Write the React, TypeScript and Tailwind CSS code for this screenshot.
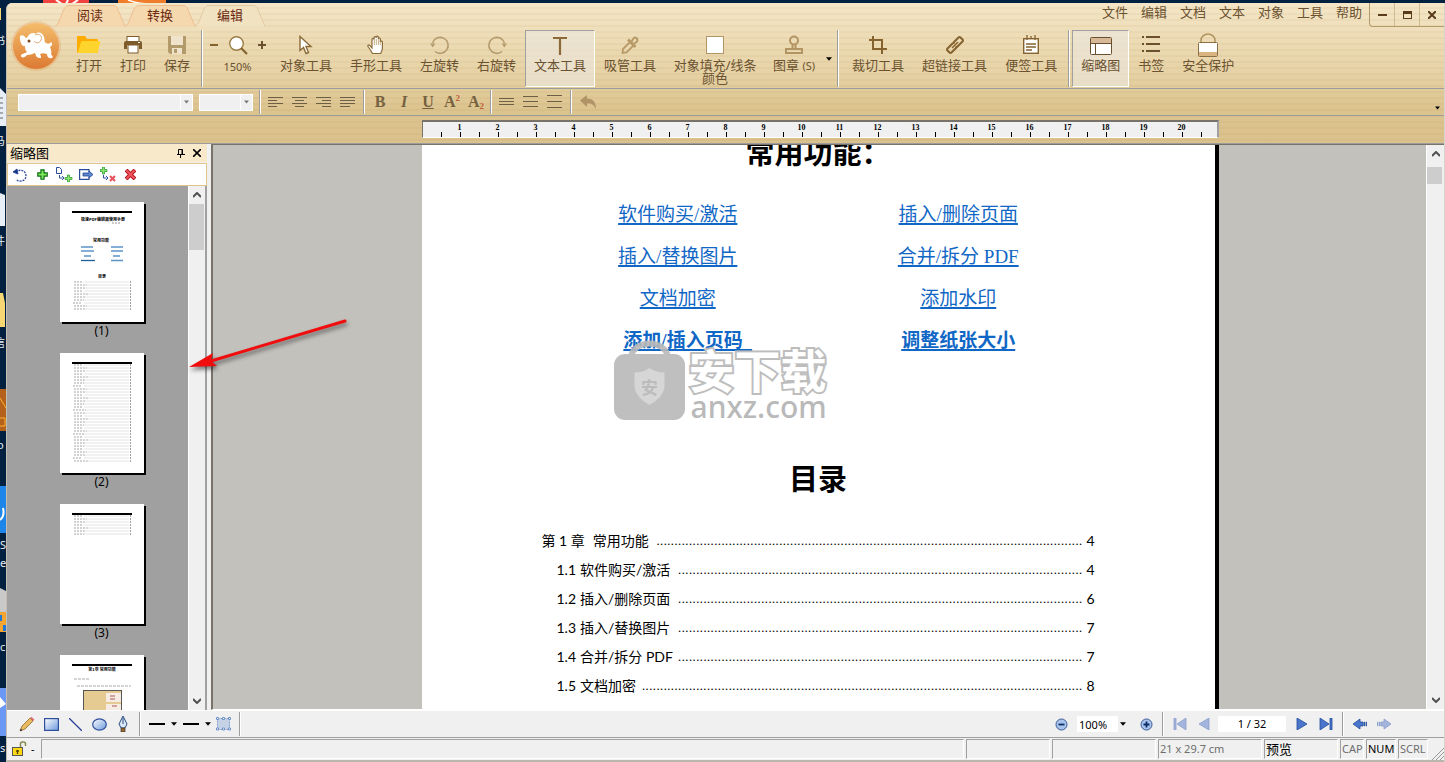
import React from "react";

const ruler = Array.from({ length: 20 }, (_, i) => i + 1);
const menus = ["文件", "编辑", "文档", "文本", "对象", "工具", "帮助"];

const tocRows = [
  { num: "第 1 章", title: "常用功能", page: "4", dots: 118 },
  { num: "1.1", title: "软件购买/激活", page: "4", dots: 112 },
  { num: "1.2", title: "插入/删除页面", page: "6", dots: 112 },
  { num: "1.3", title: "插入/替换图片", page: "7", dots: 112 },
  { num: "1.4", title: "合并/拆分 PDF", page: "7", dots: 112 },
  { num: "1.5", title: "文档加密", page: "8", dots: 122 },
];

/* Ribbon icons */
const FolderIcon = () => (
  <svg width="24" height="20" viewBox="0 0 24 20">
    <path d="M0 2q0-1 1-1h7l2 3h10q1 0 1 1v13H1q-1 0-1-1z" fill="#ffab00" />
    <path d="M5 6h17q2 0 1 2l-2 9q0 1-2 1H1q-1 0 0-1l3-10z" fill="#ffd52d" />
  </svg>
);

const PrintIcon = () => (
  <svg width="20" height="20" viewBox="0 0 20 20">
    <rect x="4" y="1.500" width="12" height="5" fill="#fff" stroke="#7d5b2b" />
    <path d="M1 8q0-2 2-2h14q2 0 2 2v6h-3v-4H4v4H1z" fill="#7d5b2b" />
    <rect x="5" y="10" width="10" height="8" fill="#fff" stroke="#7d5b2b" />
    <rect x="15" y="7" width="2" height="1" fill="#fff" />
  </svg>
);

const SaveIcon = () => (
  <svg width="20" height="20" viewBox="0 0 20 20">
    <path d="M1 1h18v18H3l-2-2z" fill="#b39a6b" />
    <rect x="4" y="1" width="12" height="9" fill="#efe3cb" />
    <rect x="5" y="13" width="10" height="6" fill="#efe3cb" />
    <rect x="7" y="14" width="3" height="4" fill="#b39a6b" />
  </svg>
);

const CursorIcon = () => (
  <svg width="20" height="20" viewBox="0 0 20 20">
    <path d="M4 1.500v14l3.500-3 2.500 6 2.500-1-2.500-6h5z" fill="#fff" stroke="#8a6a35" strokeWidth="1.400" />
  </svg>
);

const HandIcon = () => (
  <svg width="20" height="20" viewBox="0 0 20 20">
    <path
      d="M6.500 18.500c-1-2-3-5-4.500-7-.7-1.300 1-2 2-.8L6 13V4.500c0-1.500 2-1.500 2 0V3c0-1.800 2.200-1.800 2.200 0v-.6c0-1.800 2.200-1.800 2.200 0V4c.2-1.500 2-1.300 2 .2V7c.3-1.300 2-1.200 2 .3V13c0 3-1.400 4-1.700 5.500z"
      fill="#fff"
      stroke="#8a6a35"
      strokeWidth="1.200"
    />
    <path d="M8.300 4v6M10.300 4v6M12.400 4v6M14.300 6v4" stroke="#b79a67" strokeWidth=".8" />
  </svg>
);

const RotateIcon = ({ flip }: { flip?: boolean }) => (
  <svg width="20" height="20" viewBox="0 0 20 20" className={flip ? "-scale-x-100" : ""}>
    <path d="M2.500 8A8 8 0 1 1 5 16.500" fill="none" stroke="#b59b6c" strokeWidth="1.600" />
    <path d="M0 8.500h5.400L2.700 12.500z" fill="#b59b6c" />
  </svg>
);

const TextIcon = () => (
  <svg width="20" height="20" viewBox="0 0 20 20">
    <path d="M3 3h14M10 3v17" stroke="#8b6a38" strokeWidth="2.200" />
  </svg>
);

const DropperIcon = () => (
  <svg width="20" height="20" viewBox="0 0 20 20" fill="none" stroke="#b79a67" strokeWidth="1.800">
    <path d="M2.500 18l.5-4L10 7l3.500 3.500-7 7z" />
    <path d="M8 4.500l7.500 7.500" strokeWidth="2.800" />
    <path d="M11 7.500l2.500-4c1.500-2.500 5 .5 3.500 3L13 9.500z" strokeWidth="2" />
  </svg>
);

const StampIcon = () => (
  <svg width="20" height="20" viewBox="0 0 20 20" fill="none" stroke="#b39463" strokeWidth="2">
    <circle cx="10" cy="5.500" r="4" />
    <path d="M8.500 9v5M11.500 9v5M2 14h16v4H2z" />
  </svg>
);

const CropIcon = () => (
  <svg width="20" height="20" viewBox="0 0 20 20" fill="none" stroke="#85632f" strokeWidth="2">
    <path d="M1 5h13v14M5 1v13h14" />
  </svg>
);

const LinkIcon = () => (
  <svg width="20" height="20" viewBox="0 0 20 20" fill="none" stroke="#85632f" strokeWidth="2">
    <path d="M8.500 7.500l5-5q1-1 2 0l2 2q1 1 0 2l-5 5q-1 1-2 0" />
    <path d="M11.500 12.500l-5 5q-1 1-2 0l-2-2q-1-1 0-2l5-5q1-1 2 0" />
    <path d="M7 13l6-6" strokeWidth="1.500" />
  </svg>
);

const NoteIcon = () => (
  <svg width="20" height="20" viewBox="0 0 20 20">
    <rect x="2.700" y="3.700" width="14.600" height="14.600" fill="#fff" stroke="#85632f" strokeWidth="1.400" />
    <path d="M6 0v5M10 1v3M14 0v5M5 9h10M5 12h10M5 15h6" stroke="#85632f" strokeWidth="1.300" />
  </svg>
);

const ThumbIcon = () => (
  <svg width="24" height="20" viewBox="0 0 24 20">
    <rect x="1.500" y="2.500" width="21" height="17" rx="1" fill="#fff" stroke="#6b5030" />
    <path d="M2 3h20v5H2z" fill="#d7b897" />
    <path d="M2 8.500h20M6.500 8.500V19" stroke="#6b5030" />
  </svg>
);

const ListIcon = () => (
  <svg width="20" height="20" viewBox="0 0 20 20">
    <path d="M1 2h2M5 2h14M1 9h2M5 9h14M1 16h2M5 16h14" stroke="#6b5030" strokeWidth="2" />
  </svg>
);

const LockIcon = () => (
  <svg width="22" height="24" viewBox="0 0 22 24">
    <path d="M4 10V7.500a7 6.500 0 0 1 14 0V10" fill="none" stroke="#b0935f" strokeWidth="1.500" />
    <rect x="1.500" y="9.500" width="19" height="14" rx="1" fill="#fff" stroke="#8d6e42" />
    <path d="M2 19h18v4H2z" fill="#d9b481" />
  </svg>
);

const SquareIcon = () => <span className="block h-[18px] w-[18px] border border-[#b39463] bg-white" />;

const ElephantLogo = () => (
  <svg width="52" height="52" viewBox="0 0 52 52" className="absolute left-[3px] top-[17px]">
    <defs>
      <linearGradient id="logo" x1="0" y1="0" x2="0" y2="1">
        <stop offset="0" stopColor="#f4bd6c" />
        <stop offset="1" stopColor="#dc7a32" />
      </linearGradient>
    </defs>
    <circle cx="26" cy="26" r="25" fill="#e9a060" opacity=".35" />
    <circle cx="26" cy="26" r="23" fill="url(#logo)" />
    <path
      d="M10 18c-1-3 3-4 5-1 1 2 2 1 3-1 2-3 6-4 8-2 2-3 7-1 8 3 1 3 0 5 2 6 2 1 4 1 5-1 2 1 1 4-1 5 1 3 2 5 1 7 1 2 3 3 1 4-3 1-5-1-5-4-3-1-5-1-7 0 1 2 2 4 0 4-4 0-4-3-5-5-3 1-5 2-8 2-2 3-6 3-6 1 0-3 4-2 6-4-2-2-2-4-2-6-3 1-5-4-5-8z"
      fill="#fff"
    />
    <path d="M25 15c4-2 8 1 6 5-1 3-5 4-7 1" fill="none" stroke="#e0ab78" />
    <circle cx="19" cy="21" r="1.500" fill="#7c4a20" />
  </svg>
);

const Caret = ({ className = "" }: { className?: string }) => (
  <svg width="7" height="4" viewBox="0 0 7 4" className={className} fill="currentColor">
    <path d="M0 0h7L3.500 4z" />
  </svg>
);

interface ToolProps {
  label: React.ReactNode;
  icon: React.ReactNode;
  active?: boolean;
  width?: string;
}

const Tool: React.FC<ToolProps> = ({ label, icon, active, width = "" }) => (
  <button
    className={`flex h-[57px] shrink-0 flex-col items-center px-2 pt-1 text-[13px] leading-[13px] ${width} ${
      active ? "border border-b-white border-l-[#a0a0a0] border-r-white border-t-[#a0a0a0] bg-[#ebe5da]/70" : "border border-transparent"
    }`}
  >
    <span className="flex h-5 items-center justify-center">{icon}</span>
    <span className="mt-1 whitespace-nowrap">{label}</span>
  </button>
);

const Divider = ({ h = "h-[57px]" }: { h?: string }) => (
  <span className={`w-[2px] shrink-0 border-l border-r border-l-[#9c9c9c] border-r-white ${h}`} />
);

const AlignIcon = ({ kind }: { kind: "left" | "center" | "right" | "justify" }) => {
  const d = {
    left: "M0 1.500h15M0 4.500h9M0 7.500h15M0 10.500h9",
    center: "M0 1.500h15M3 4.500h9M0 7.500h15M3 10.500h9",
    right: "M0 1.500h15M6 4.500h9M0 7.500h15M6 10.500h9",
    justify: "M0 1.500h15M0 4.500h15M0 7.500h15M0 10.500h10",
  }[kind];
  return (
    <svg width="15" height="12" viewBox="0 0 15 12" stroke="#6d5f45">
      <path d={d} />
    </svg>
  );
};

const SpacingIcon = ({ gap }: { gap: number }) => (
  <svg width="15" height="14" viewBox="0 0 15 14" stroke="#6d5f45">
    <path d={`M0 ${6.5 - gap}h15M0 6.500h15M0 ${6.5 + gap}h15`} />
  </svg>
);

const FmtButton = ({ label, children }: { label: string; children: React.ReactNode }) => (
  <button aria-label={label} className="flex h-6 w-6 shrink-0 items-center justify-center font-['Liberation_Serif',serif] text-base font-bold leading-none text-[#75603f]">
    {children}
  </button>
);

const Tab = ({ label, active }: { label: string; active?: boolean }) => (
  <button className="relative h-[23px] w-[70px] text-[13px] leading-none text-[#6b2a10]">
    <svg width="72" height="22" viewBox="0 0 72 22" className="absolute left-0 top-px">
      <path
        d="M0 21.500C5 20 7 4 11 1.500Q12 .5 14 .5h44q3 0 4 2l8 19"
        fill={active ? "#f1e2c2" : "#f6d8ae"}
        stroke={active ? "#e4c9a0" : "#eebd90"}
      />
    </svg>
    <span className="relative">{label}</span>
  </button>
);

const ScrollArrow = ({ down }: { down?: boolean }) => (
  <button aria-label={down ? "向下滚动" : "向上滚动"} className="flex h-[18px] w-full items-center justify-center">
    <svg width="8" height="6" viewBox="0 0 8 6" className={down ? "rotate-180" : ""}>
      <path d="M0 5l4-4 4 4" fill="none" stroke="#505050" strokeWidth="2" />
    </svg>
  </button>
);

/* Page thumbnails */
const lineRows = (from: number, count: number, step = 3) =>
  Array.from({ length: count }, (_, i) => (
    <g key={i}>
      <path d={`M${i % 8 === 7 ? 13 : 14} ${from + i * step}h${8 + ((i * 5) % 7)}`} stroke="#a5a5a5" strokeDasharray="2 1" />
      <path d={`M24 ${from + i * step}h45`} stroke="#e4e4e4" />
      <path d={`M70 ${from + i * step}h1`} stroke="#444" />
    </g>
  ));

const Thumb = ({ n }: { n: number }) => (
  <li className="flex h-[151px] shrink-0 flex-col items-center">
    <a href={`#page-${n}`} className="block bg-white shadow-[2px_2px_0_#000]">
      <svg width="84" height="120" viewBox="0 0 84 120" className="block" fontFamily="'Noto Sans CJK SC',sans-serif" textAnchor="middle">
        <path d="M12 10h60" stroke="#000" strokeWidth="2" />
        {n === 1 && (
          <g>
            <text x="43" y="18.500" fontSize="4" fontWeight="700">极速PDF编辑器使用手册</text>
            <path d="M52 21h9" stroke="#999" strokeDasharray="2 1" />
            <text x="41" y="39.500" fontSize="4" fontWeight="700">常用功能</text>
            <path d="M21 45h12M21 49h13M24 54h7M51 45h12M51 49h12M53 54h7M51 58.500h12" stroke="#5b94c8" strokeWidth="1.300" />
            <path d="M21 58.500h14" stroke="#1f5f9c" strokeWidth="1.300" />
            <text x="42" y="75.500" fontSize="4" fontWeight="700">目录</text>
            {lineRows(80, 10)}
          </g>
        )}
        {n === 2 && lineRows(12, 33)}
        {n === 3 && lineRows(12, 7)}
        {n === 4 && (
          <g>
            <text x="42" y="15.500" fontSize="4" fontWeight="700">第1章 常用功能</text>
            <path d="M14 24h15M17 31h54" stroke="#aaa" strokeDasharray="3 1" />
            <rect x="23.500" y="35.500" width="38" height="40" fill="#e5cb92" stroke="#555" />
            <path d="M46 38h15v9H46zM46 49h15v8H46z" fill="#f6ece4" />
            <path d="M50 41h5M50 44h5M52 51h5" stroke="#a55" />
          </g>
        )}
      </svg>
    </a>
    <span className="mt-[3px] text-xs leading-3 text-black">({n})</span>
  </li>
);

const PanelButton = ({ label, children }: { label: string; children: React.ReactNode }) => (
  <button aria-label={label} className="flex h-5 w-[22px] items-center justify-center">
    {children}
  </button>
);

const plus = "M4 0h4v4h4v4H8v4H4V8H0V4h4z";

const Sidebar = () => (
  <aside className="flex w-[200px] shrink-0 flex-col bg-[#f0f0f0]">
    <div className="flex h-[18px] items-center bg-[#f9e9cb] pl-[3px] pr-0.5 text-black">
      <h2 className="flex-1 text-[13px] leading-none">缩略图</h2>
      <button aria-label="固定" className="flex h-4 w-4 items-center justify-center">
        <svg width="8" height="9" viewBox="0 0 8 9" fill="none" stroke="#000">
          <path d="M1.500 5V.5h4V5M5 .5V5M0 5.500h8M3.500 5.500V9" />
        </svg>
      </button>
      <button aria-label="关闭面板" className="flex h-4 w-4 items-center justify-center">
        <svg width="8" height="8" viewBox="0 0 8 8" stroke="#000" strokeWidth="1.600">
          <path d="M0 0l8 8M8 0L0 8" />
        </svg>
      </button>
    </div>
    <div className="mt-px flex h-[23px] items-center border border-[#e0c48a] bg-white pl-px">
      <PanelButton label="旋转">
        <svg width="14" height="14" viewBox="0 0 14 14" fill="none" stroke="#2f4a9e">
          <path d="M3 4.500C6 .500 13 2 13 8c0 5-7 7-10 3" strokeWidth="1.300" strokeDasharray="2 1" />
          <path d="M0 4l4-3 1 5z" fill="#16347c" />
        </svg>
      </PanelButton>
      <PanelButton label="添加">
        <svg width="11" height="11" viewBox="-1 -1 14 14"><path d={plus} fill="#7ee85c" stroke="#0a6b12" strokeWidth="1.500" /></svg>
      </PanelButton>
      <PanelButton label="插入页面">
        <svg width="17" height="15" viewBox="0 0 17 15">
          <path d="M.5.500h3l2 2v4h-5zM3.500 8v3h3M6 9l2 2-2 2" fill="none" stroke="#2a4c9c" />
          <path d="M11.500 8h2v2.500H16v2h-2.500V15h-2v-2.500H9v-2h2.500z" fill="#8de86c" stroke="#2e9a36" strokeWidth=".8" />
        </svg>
      </PanelButton>
      <PanelButton label="提取页面">
        <svg width="15" height="11" viewBox="0 0 15 11">
          <path d="M10 3V.6H.6v9.800H10V8" fill="none" stroke="#2a4c9c" strokeWidth="1.200" />
          <path d="M4 4h6V2l4 3.500L10 9V7H4z" fill="#5b86d0" stroke="#24488f" strokeWidth=".8" />
        </svg>
      </PanelButton>
      <PanelButton label="替换页面">
        <svg width="17" height="15" viewBox="0 0 17 15">
          <path d="M2.500 0h2v2.500H7v2H4.500V7h-2V4.500H0v-2h2.500z" fill="#8de86c" stroke="#2e9a36" strokeWidth=".8" />
          <path d="M3.500 8v3h3M6 9l2 2-2 2" fill="none" stroke="#2a4c9c" />
          <path d="M10 9l5 5M15 9l-5 5" stroke="#e8505a" strokeWidth="2" />
        </svg>
      </PanelButton>
      <PanelButton label="删除">
        <svg width="11" height="11" viewBox="0 0 11 11">
          <path d="M1 1l9 9M10 1l-9 9" stroke="#b3141e" strokeWidth="4" />
          <path d="M1.500 1.500l8 8M9.500 1.500l-8 8" stroke="#f0545c" strokeWidth="2" />
        </svg>
      </PanelButton>
    </div>
    <div className="flex min-h-0 flex-1">
      <ul className="flex min-w-0 flex-1 flex-col overflow-hidden bg-[#a0a0a0] pl-2 pt-4">
        {[1, 2, 3, 4].map((n) => (
          <Thumb key={n} n={n} />
        ))}
      </ul>
      <div className="flex w-[17px] flex-col border-l border-white bg-[#f0f0f0]">
        <ScrollArrow />
        <div className="h-[46px] w-[15px] bg-[#cdcdcd]" />
        <div className="flex-1" />
        <ScrollArrow down />
      </div>
      <div className="w-[2px] bg-[#a0a0a0]" />
    </div>
  </aside>
);

const DocLink = ({ children, className = "" }: { children: React.ReactNode; className?: string }) => (
  <p className={`h-[42px] ${className}`}>
    <a href="#toc" className="text-[#1167c5] underline decoration-2 underline-offset-2">{children}</a>
  </p>
);

const Watermark = () => (
  <div className="pointer-events-none absolute left-[192px] top-[195px] flex items-end gap-1 text-[#b9b9b9]">
    <svg width="71" height="82" viewBox="0 0 71 82" className="opacity-90">
      <path d="M17 17C20 -1 51 -1 54 17" fill="none" stroke="currentColor" strokeWidth="6" />
      <rect y="14" width="71" height="66" rx="11" fill="currentColor" />
      <path d="M35.500 28c5 4 10 4 15 4.500V47q-1 10-15 18-14-8-15-18V32.500c5-.5 10-.5 15-4.500z" fill="#d2d2d2" />
      <text x="35.500" y="54" fontSize="17" fontWeight="700" textAnchor="middle" fill="#b5b5b5">安</text>
    </svg>
    <div className="leading-none">
      <p className="h-[39px] whitespace-nowrap text-[46px] font-bold leading-[54px] text-white [-webkit-text-stroke:4px_#bdbdbd] [paint-order:stroke_fill]">安下载</p>
      <p className="h-10 pl-0.5 font-['Noto_Sans',sans-serif] text-[30px] font-medium leading-[50px]">anxz.com</p>
    </div>
  </div>
);

const DocPage = () => (
  <article className="relative w-[797px] shrink-0 border-r-4 border-black bg-white px-[120px] text-black">
    <div className="h-[49px] overflow-hidden">
      <h1 className="-mt-3 text-center text-[29px] font-bold leading-10">常用功能：</h1>
    </div>
    <div className="-mx-1 grid grid-cols-2 text-center font-['Liberation_Serif','Noto_Sans_CJK_SC',serif] text-[19px] leading-[42px]">
      <DocLink>软件购买/激活</DocLink>
      <DocLink>插入/删除页面</DocLink>
      <DocLink>插入/替换图片</DocLink>
      <DocLink>合并/拆分 PDF</DocLink>
      <DocLink>文档加密</DocLink>
      <DocLink>添加水印</DocLink>
      <DocLink className="pl-5 font-bold">添加/插入页码&nbsp;&nbsp;</DocLink>
      <DocLink className="font-bold">调整纸张大小</DocLink>
    </div>
    <Watermark />
    <h1 id="toc" className="pt-[97px] text-center text-[29px] font-bold leading-10">目录</h1>
    <ol className="pt-[27px] font-['Lato','Noto_Sans_CJK_SC',sans-serif] text-[14px] leading-[29px]">
      {tocRows.map((row, i) => (
        <li key={row.num}>
          <a href={`#page-${row.page}`} className={`flex gap-1 ${i > 0 ? "pl-[15px]" : ""}`}>
            <span className={i > 0 ? "" : "pr-1"}>{row.num}</span>
            <span>{row.title}</span>
            <span aria-hidden="true" className="min-w-0 flex-1 whitespace-nowrap text-right font-['Liberation_Sans',sans-serif] text-[13px]">
              {".".repeat(row.dots)}
            </span>
            <span>{row.page}</span>
          </a>
        </li>
      ))}
    </ol>
  </article>
);

const BarButton = ({ label, children }: { label: string; children: React.ReactNode }) => (
  <button aria-label={label} className="flex h-6 w-6 shrink-0 items-center justify-center">
    {children}
  </button>
);

const ZoomGlyph = ({ d }: { d: string }) => (
  <svg width="13" height="13" viewBox="0 0 13 13">
    <circle cx="6.500" cy="6.500" r="5.500" fill="#a9c4ea" stroke="#3a5a9a" />
    <path d={d} stroke="#0f2d6b" strokeWidth="1.800" />
  </svg>
);

const NavGlyph = ({ d, dim }: { d: string; dim?: boolean }) => (
  <svg width="14" height="12" viewBox="0 0 14 12">
    <path d={d} fill={dim ? "#a3b5dc" : "#4a76cb"} stroke={dim ? "#8ba0cc" : "#234c9c"} strokeWidth=".8" />
  </svg>
);

const BottomBar = () => (
  <div className="flex h-7 shrink-0 items-center border-b border-t border-b-[#a0a0a0] border-t-white bg-[#f0f0f0] pl-2 pr-12 text-black">
    <BarButton label="铅笔">
      <svg width="16" height="16" viewBox="0 0 16 16">
        <path d="M1 15l2-5 8-8 3 3-8 8z" fill="#e9b85f" stroke="#8a6a30" strokeWidth=".8" />
        <path d="M11 2l1.500-1.300 3 3L14 5z" fill="#dd6f72" />
        <path d="M1 15l.8-2.200 1.500 1.500z" fill="#222" />
      </svg>
    </BarButton>
    <BarButton label="矩形">
      <svg width="15" height="13" viewBox="0 0 15 13">
        <defs>
          <linearGradient id="blue" x1="0" y1="0" x2="1" y2="1">
            <stop offset="0" stopColor="#fff" />
            <stop offset="1" stopColor="#6c98dc" />
          </linearGradient>
        </defs>
        <rect x=".6" y=".6" width="13.800" height="11.800" fill="url(#blue)" stroke="#2f4f9c" strokeWidth="1.200" />
      </svg>
    </BarButton>
    <BarButton label="直线">
      <svg width="13" height="13" viewBox="0 0 13 13" stroke="#2d449a" strokeWidth="1.300"><path d="M0 0l13 13" /></svg>
    </BarButton>
    <BarButton label="椭圆">
      <svg width="15" height="13" viewBox="0 0 15 13">
        <ellipse cx="7.500" cy="6.500" rx="6.800" ry="5.600" fill="url(#blue)" stroke="#2f4f9c" strokeWidth="1.200" />
      </svg>
    </BarButton>
    <BarButton label="钢笔">
      <svg width="10" height="16" viewBox="0 0 10 16">
        <path d="M5 0l4 8-2 4H3L1 8z" fill="#dbe7f7" stroke="#2a4c7c" />
        <path d="M5 2v6" stroke="#2a4c7c" />
        <path d="M3 12h4v4H3z" fill="#9a6a2c" stroke="#222" strokeWidth=".6" />
      </svg>
    </BarButton>
    <span className="pl-1"><Divider h="block h-6" /></span>
    <button aria-label="线型" className="ml-2 flex h-6 items-center gap-[6px] pr-[6px]">
      <span className="h-[2px] w-4 bg-black" />
      <Caret className="w-[6px]" />
    </button>
    <button aria-label="线宽" className="flex h-6 items-center gap-[6px]">
      <span className="h-[2px] w-4 bg-black" />
      <Caret className="w-[6px]" />
    </button>
    <BarButton label="选择对象">
      <svg width="15" height="14" viewBox="0 0 15 14">
        <rect x="1.500" y="1.500" width="12" height="11" fill="#c5d2e6" stroke="#7f9cc8" strokeDasharray="2 1" />
        {[0, 6, 12].map((x) => (
          <path key={x} d={`M${x + 0.5}.5h2v2h-2zM${x + 0.5} 11h2v2h-2z`} fill="#fff" stroke="#6f92c8" />
        ))}
      </svg>
    </BarButton>
    <span className="pl-1"><Divider h="block h-6" /></span>
    <div className="flex-1" />
    <BarButton label="缩小"><ZoomGlyph d="M3.500 6.500h6" /></BarButton>
    <label className="relative mx-1 text-[11px]">
      <select aria-label="缩放比例" className="block h-4 w-[53px] appearance-none bg-white pl-[2px] leading-none" defaultValue="100%">
        <option>100%</option>
        <option>150%</option>
      </select>
      <span className="pointer-events-none absolute inset-y-0 right-0 flex w-3 items-center bg-[#f0f0f0] pl-[2px]"><Caret className="w-[6px]" /></span>
    </label>
    <BarButton label="放大"><ZoomGlyph d="M3.500 6.500h6M6.500 3.500v6" /></BarButton>
    <span className="px-1"><Divider h="block h-6" /></span>
    <BarButton label="第一页"><NavGlyph dim d="M1 0h2v12H1zM13 0v12L4 6z" /></BarButton>
    <BarButton label="上一页"><NavGlyph dim d="M12 0v12L2 6z" /></BarButton>
    <input aria-label="页码" defaultValue="1 / 32" className="ml-0.5 mr-1 h-4 w-[68px] bg-white text-center text-[11px]" />
    <BarButton label="下一页"><NavGlyph d="M2 0v12L12 6z" /></BarButton>
    <BarButton label="最后一页"><NavGlyph d="M11 0h2v12h-2zM1 0v12l9-6z" /></BarButton>
    <span className="px-1"><Divider h="block h-6" /></span>
    <BarButton label="后退"><NavGlyph d="M0 6l7-5v3h3v4H7v3zM11 4h.5v4H11zM13 4h.5v4H13z" /></BarButton>
    <BarButton label="前进"><NavGlyph dim d="M14 6L7 1v3H4v4h3v3zM2.500 4h.5v4h-.5zM.5 4H1v4H.5z" /></BarButton>
  </div>
);

const Cell = ({ children, className = "" }: { children?: React.ReactNode; className?: string }) => (
  <div className={`h-5 shrink-0 whitespace-nowrap border border-b-white border-l-[#a0a0a0] border-r-white border-t-[#a0a0a0] pl-px leading-[18px] ${className}`}>
    {children}
  </div>
);

const StatusBar = () => (
  <footer className="flex h-6 shrink-0 items-center gap-[2px] border-b-2 border-[#bab7ae] bg-[#f0f0f0] font-['Noto_Sans','Noto_Sans_CJK_SC',sans-serif] text-[11px] text-[#6d6d6d]">
    <button aria-label="文档权限" className="flex w-8 shrink-0 items-center gap-1 pl-1 text-black">
      <svg width="16" height="16" viewBox="0 0 16 16">
        <path d="M9.500 7V3q0-2 2-2h1q2 0 2 2v2" fill="none" stroke="#8a8a50" strokeWidth="1.500" />
        <rect x="1.500" y="6.500" width="10" height="8" fill="#ffd814" stroke="#555" />
        <path d="M6.500 9v4M5 10h3" stroke="#554400" strokeWidth="1.300" />
      </svg>
      <span>-</span>
    </button>
    <Cell className="min-w-0 flex-1" />
    <Cell className="w-[84px]" />
    <Cell className="w-[104px]" />
    <Cell className="w-[104px]">21 x 29.7 cm</Cell>
    <Cell className="w-[74px] text-[13px] text-black">预览</Cell>
    <Cell className="w-6">CAP</Cell>
    <Cell className="w-[30px] text-black">NUM</Cell>
    <Cell className="w-[30px]">SCRL</Cell>
    <svg width="14" height="14" viewBox="0 0 14 14" className="shrink-0 self-end" stroke="#9a9a9a">
      <path d="M2 14L14 2M6 14l8-8M10 14l4-4" />
    </svg>
  </footer>
);

/* Sliver of the desktop left of the window */
const DesktopEdge = () => (
  <svg width="6" height="762" viewBox="0 0 6 762" className="shrink-0" fill="#e8eef5" fontFamily="'Noto Sans','Noto Sans CJK SC',sans-serif" fontSize="11">
    <path d="M0 8h1v12H0zM0 293h3l2 10v24H0z" fill="#f7d774" />
    <text x="-6" y="45">书</text>
    <path d="M0 88l6 6v32H0zM0 193l5 2v31H0z" />
    <path d="M0 98h3M0 103h3M0 108h3M0 113h3M0 118h3M0 598h6M0 606h6" stroke="#666" />
    <text x="-6" y="145">马</text>
    <text x="-6" y="245">件</text>
    <text x="-6" y="347">信</text>
    <path d="M0 389h6v42H0z" fill="#b4611c" />
    <path d="M0 398l6 10M0 418h5v8H0" stroke="#ffb22e" fill="none" />
    <text x="-3" y="449">o</text>
    <path d="M0 486h6v47H0z" fill="#1e86e8" />
    <path d="M3 508q2 8-3 12" stroke="#fff" strokeWidth="2" fill="none" />
    <text x="0" y="549">S</text>
    <text x="0" y="567">e</text>
    <path d="M0 588l6 3v21H0z" fill="#c9c9c9" />
    <path d="M0 612h6v20H0z" fill="#f5a530" />
    <path d="M0 615h2v6H0zM3 625h3v6H3z" fill="#1f78d8" />
    <text x="0" y="651">c</text>
    <path d="M0 688h6v48H0z" fill="#6b97f5" />
    <path d="M0 697l6 7-6 4z" fill="#fff" />
    <text x="0" y="752">s</text>
  </svg>
);

export default function App() {
  return (
    <div className="relative flex h-screen overflow-hidden bg-[#02203f] pt-[3px] font-['Noto_Sans','Noto_Sans_CJK_SC',sans-serif] text-[#6b5230]">
      {/* Desktop icons behind the title bar */}
      <svg width="130" height="4" viewBox="0 0 130 4" className="absolute left-[42px] top-0">
        <path d="M1 0h46v4H1z" fill="#f0433f" />
        <path d="M14 0l6 4M24 4l2-4M36 0l-6 4" stroke="#fff" strokeWidth="2" />
        <path d="M76 0h48v4H76z" fill="#ef7d2c" />
        <path d="M86 0q10 4 24 4" stroke="#fff" fill="none" strokeWidth="1.500" />
      </svg>
      <div className="-mt-[3px] shrink-0">
        <DesktopEdge />
      </div>

      <div className="relative flex min-w-0 flex-1 flex-col overflow-hidden rounded-tl-md border-l border-r border-l-[#c4bfb2] border-r-[#d6d3cb] bg-[#f0f0f0]">
        <header className="relative shrink-0 bg-[repeating-linear-gradient(to_bottom,transparent_0_4px,rgba(150,110,50,0.06)_4px_6px),linear-gradient(to_bottom,#f4e6c7,#e6d2a5_50%,#dcc48f_75%,#dbc18c)]">
          {/* Title row */}
          <div className="flex h-[27px] items-start">
            <div className="flex pl-12 pt-px">
              <Tab label="阅读" />
              <Tab label="转换" />
              <Tab label="编辑" active />
            </div>
            <div className="flex-1" />
            <nav className="flex gap-[13px] pr-[7px] pt-[3px] text-[13px] leading-[13px]">
              {menus.map((m) => (
                <button key={m}>{m}</button>
              ))}
            </nav>
            <div className="flex h-6 rounded-bl border-b border-l border-[#b39a6b] text-[#5a3b1a]">
              <button aria-label="最小化" className="flex w-[25px] items-center justify-center border-r border-[#d0bc92]">
                <span className="h-[2px] w-[9px] bg-[#5a3b1a]" />
              </button>
              <button aria-label="最大化" className="flex w-[25px] items-center justify-center border-r border-[#d0bc92]">
                <span className="h-2 w-[9px] border border-t-[3px] border-[#5a3b1a]" />
              </button>
              <button aria-label="关闭" className="flex w-6 items-center justify-center">
                <svg width="8" height="8" viewBox="0 0 8 8" stroke="currentColor" strokeWidth="2"><path d="M0 0l8 8M8 0L0 8" /></svg>
              </button>
            </div>
          </div>
          <ElephantLogo />

          {/* Tool row */}
          <div className="flex h-[59px] items-start border-b border-[#9c9c9c] pl-[60px]">
            <Tool label="打开" icon={<FolderIcon />} width="w-11" />
            <Tool label="打印" icon={<PrintIcon />} width="w-11" />
            <Tool label="保存" icon={<SaveIcon />} width="w-11" />
            <span className="w-0.5 shrink-0" />
            <Divider />
            <div className="flex w-[68px] shrink-0 flex-col items-center pl-px pt-1">
              <div className="flex h-[22px] items-center gap-2">
                <button aria-label="缩小" className="flex h-5 w-3 items-center justify-center">
                  <span className="h-[2px] w-2 bg-[#85632f]" />
                </button>
                <svg width="20" height="20" viewBox="0 0 20 20">
                  <circle cx="8.500" cy="8.500" r="6.800" fill="#fff" stroke="#9b7c47" strokeWidth="1.400" />
                  <path d="M13 13l6 6" stroke="#85632f" strokeWidth="2.200" />
                </svg>
                <button aria-label="放大" className="flex h-5 w-3 items-center justify-center">
                  <svg width="8" height="8" viewBox="0 0 8 8" stroke="#6b5030" strokeWidth="2"><path d="M0 4h8M4 0v8" /></svg>
                </button>
              </div>
              <span className="mt-1 text-[11px] leading-[13px]">150%</span>
            </div>
            <Tool label="对象工具" icon={<CursorIcon />} />
            <Tool label="手形工具" icon={<HandIcon />} />
            <Tool label="左旋转" icon={<RotateIcon />} />
            <Tool label="右旋转" icon={<RotateIcon flip />} />
            <Tool label="文本工具" icon={<TextIcon />} active />
            <Tool label="吸管工具" icon={<DropperIcon />} />
            <Tool label={<>对象填充/线条<br />颜色</>} icon={<SquareIcon />} width="w-[100px]" />
            <Tool label={<>图章 <span className="text-[11px]">(S)</span></>} icon={<StampIcon />} width="w-[58px]" />
            <button aria-label="图章选项" className="flex h-[57px] w-3 shrink-0 items-center justify-center text-black">
              <Caret className="w-[6px]" />
            </button>
            <span className="pl-0.5"><Divider h="block h-[57px]" /></span>
            <span className="w-1 shrink-0" />
            <Tool label="裁切工具" icon={<CropIcon />} />
            <Tool label="超链接工具" icon={<LinkIcon />} />
            <Tool label="便签工具" icon={<NoteIcon />} />
            <span className="px-0.5"><Divider h="block h-[57px]" /></span>
            <Tool label="缩略图" icon={<ThumbIcon />} active />
            <Tool label="书签" icon={<ListIcon />} />
            <Tool label="安全保护" icon={<LockIcon />} />
          </div>

          {/* Text format row */}
          <div className="flex h-[27px] items-center border-b border-[#9c9c9c] pl-[11px]">
            <label className="relative text-xs">
              <select aria-label="字体" className="block h-[17px] w-[175px] appearance-none border border-white bg-[#f0f0f0]" defaultValue="">
                <option value=""></option>
              </select>
              <span className="pointer-events-none absolute inset-y-0 right-0 flex w-[13px] items-center justify-center border border-white text-[#777]"><Caret className="w-[5px]" /></span>
            </label>
            <label className="relative ml-[6px] text-xs">
              <select aria-label="字号" className="block h-[17px] w-[54px] appearance-none border border-white bg-[#f0f0f0]" defaultValue="">
                <option value=""></option>
              </select>
              <span className="pointer-events-none absolute inset-y-0 right-0 flex w-[13px] items-center justify-center border border-white text-[#777]"><Caret className="w-[5px]" /></span>
            </label>
            <span className="pl-[6px] pr-0.5"><Divider h="block h-6" /></span>
            <FmtButton label="左对齐"><AlignIcon kind="left" /></FmtButton>
            <FmtButton label="居中"><AlignIcon kind="center" /></FmtButton>
            <FmtButton label="右对齐"><AlignIcon kind="right" /></FmtButton>
            <FmtButton label="两端对齐"><AlignIcon kind="justify" /></FmtButton>
            <span className="pl-1 pr-[3px]"><Divider h="block h-6" /></span>
            <FmtButton label="粗体">B</FmtButton>
            <FmtButton label="斜体"><i>I</i></FmtButton>
            <FmtButton label="下划线"><u>U</u></FmtButton>
            <FmtButton label="上标">A<span className="-mt-2 text-[9px] text-[#c0603c]">2</span></FmtButton>
            <FmtButton label="下标">A<span className="mt-2 text-[9px] text-[#c0603c]">2</span></FmtButton>
            <span className="pl-0.5 pr-0.5"><Divider h="block h-6" /></span>
            <FmtButton label="单倍行距"><SpacingIcon gap={3} /></FmtButton>
            <FmtButton label="一倍半行距"><SpacingIcon gap={5} /></FmtButton>
            <FmtButton label="双倍行距"><SpacingIcon gap={6} /></FmtButton>
            <span className="px-1"><Divider h="block h-6" /></span>
            <FmtButton label="撤销">
              <svg width="16" height="14" viewBox="0 0 16 14"><path d="M0 5.500L7 0v3.500c6 0 9 4 9 10.500-2-4-4-6-9-5.500V12z" fill="#b09468" /></svg>
            </FmtButton>
            <div className="flex-1" />
            <button aria-label="更多" className="flex h-6 w-[14px] items-end justify-center pb-1 text-black"><Caret className="w-[5px]" /></button>
          </div>

          {/* Ruler */}
          <div className="flex h-7 justify-center border-b border-[#9c9c9c] pl-[207px] pr-[18px] pt-1">
            <div className="flex h-[18px] w-[797px] shrink-0 overflow-hidden border-b border-l border-r-2 border-t-2 border-[#77736b] border-b-white border-r-[#a0a0a0] bg-[#f0f0f0] pl-[18px] font-['Liberation_Serif',serif] text-[8px] font-bold leading-[9px] text-black">
              {ruler.map((n) => (
                <div key={n} className="flex w-[38px] shrink-0 flex-col justify-end text-center">
                  <span>{n}</span>
                  <span className="flex h-[5px]">
                    <span className="flex-1 border-l border-black" />
                    <span className="flex-1 border-l border-black" />
                  </span>
                </div>
              ))}
              <span className="h-[5px] self-end border-l border-black" />
            </div>
          </div>
        </header>

        {/* Panels */}
        <main className="relative flex min-h-0 flex-1">
          <Sidebar />
          <div className="w-1 shrink-0 bg-[#f0f0f0]" />
          <section className="flex min-w-0 flex-1 border-b border-l-2 border-t border-b-white border-l-[#77736b] border-t-[#77736b] bg-[#c3c1bc]">
            <div className="flex min-w-0 flex-1 justify-center overflow-hidden pl-px">
              <DocPage />
            </div>
            <div className="flex w-[18px] shrink-0 flex-col border-l border-white bg-[#f0f0f0]">
              <ScrollArrow />
              <div className="mt-1 h-[17px] w-[15px] bg-[#cdcdcd]" />
              <div className="flex-1" />
              <ScrollArrow down />
            </div>
          </section>

          {/* Pointer arrow over the panels */}
          <svg width="164" height="60" viewBox="0 0 164 60" className="pointer-events-none absolute left-[180px] top-[172px] drop-shadow-[1px_3px_2px_rgba(0,0,0,0.5)]">
            <path d="M158 5L24 45" stroke="#f00d0d" strokeWidth="3" strokeLinecap="round" />
            <path d="M2 51l24-14-2 8 6 5z" fill="#f00d0d" />
          </svg>
        </main>

        <BottomBar />
        <StatusBar />
      </div>
    </div>
  );
}
